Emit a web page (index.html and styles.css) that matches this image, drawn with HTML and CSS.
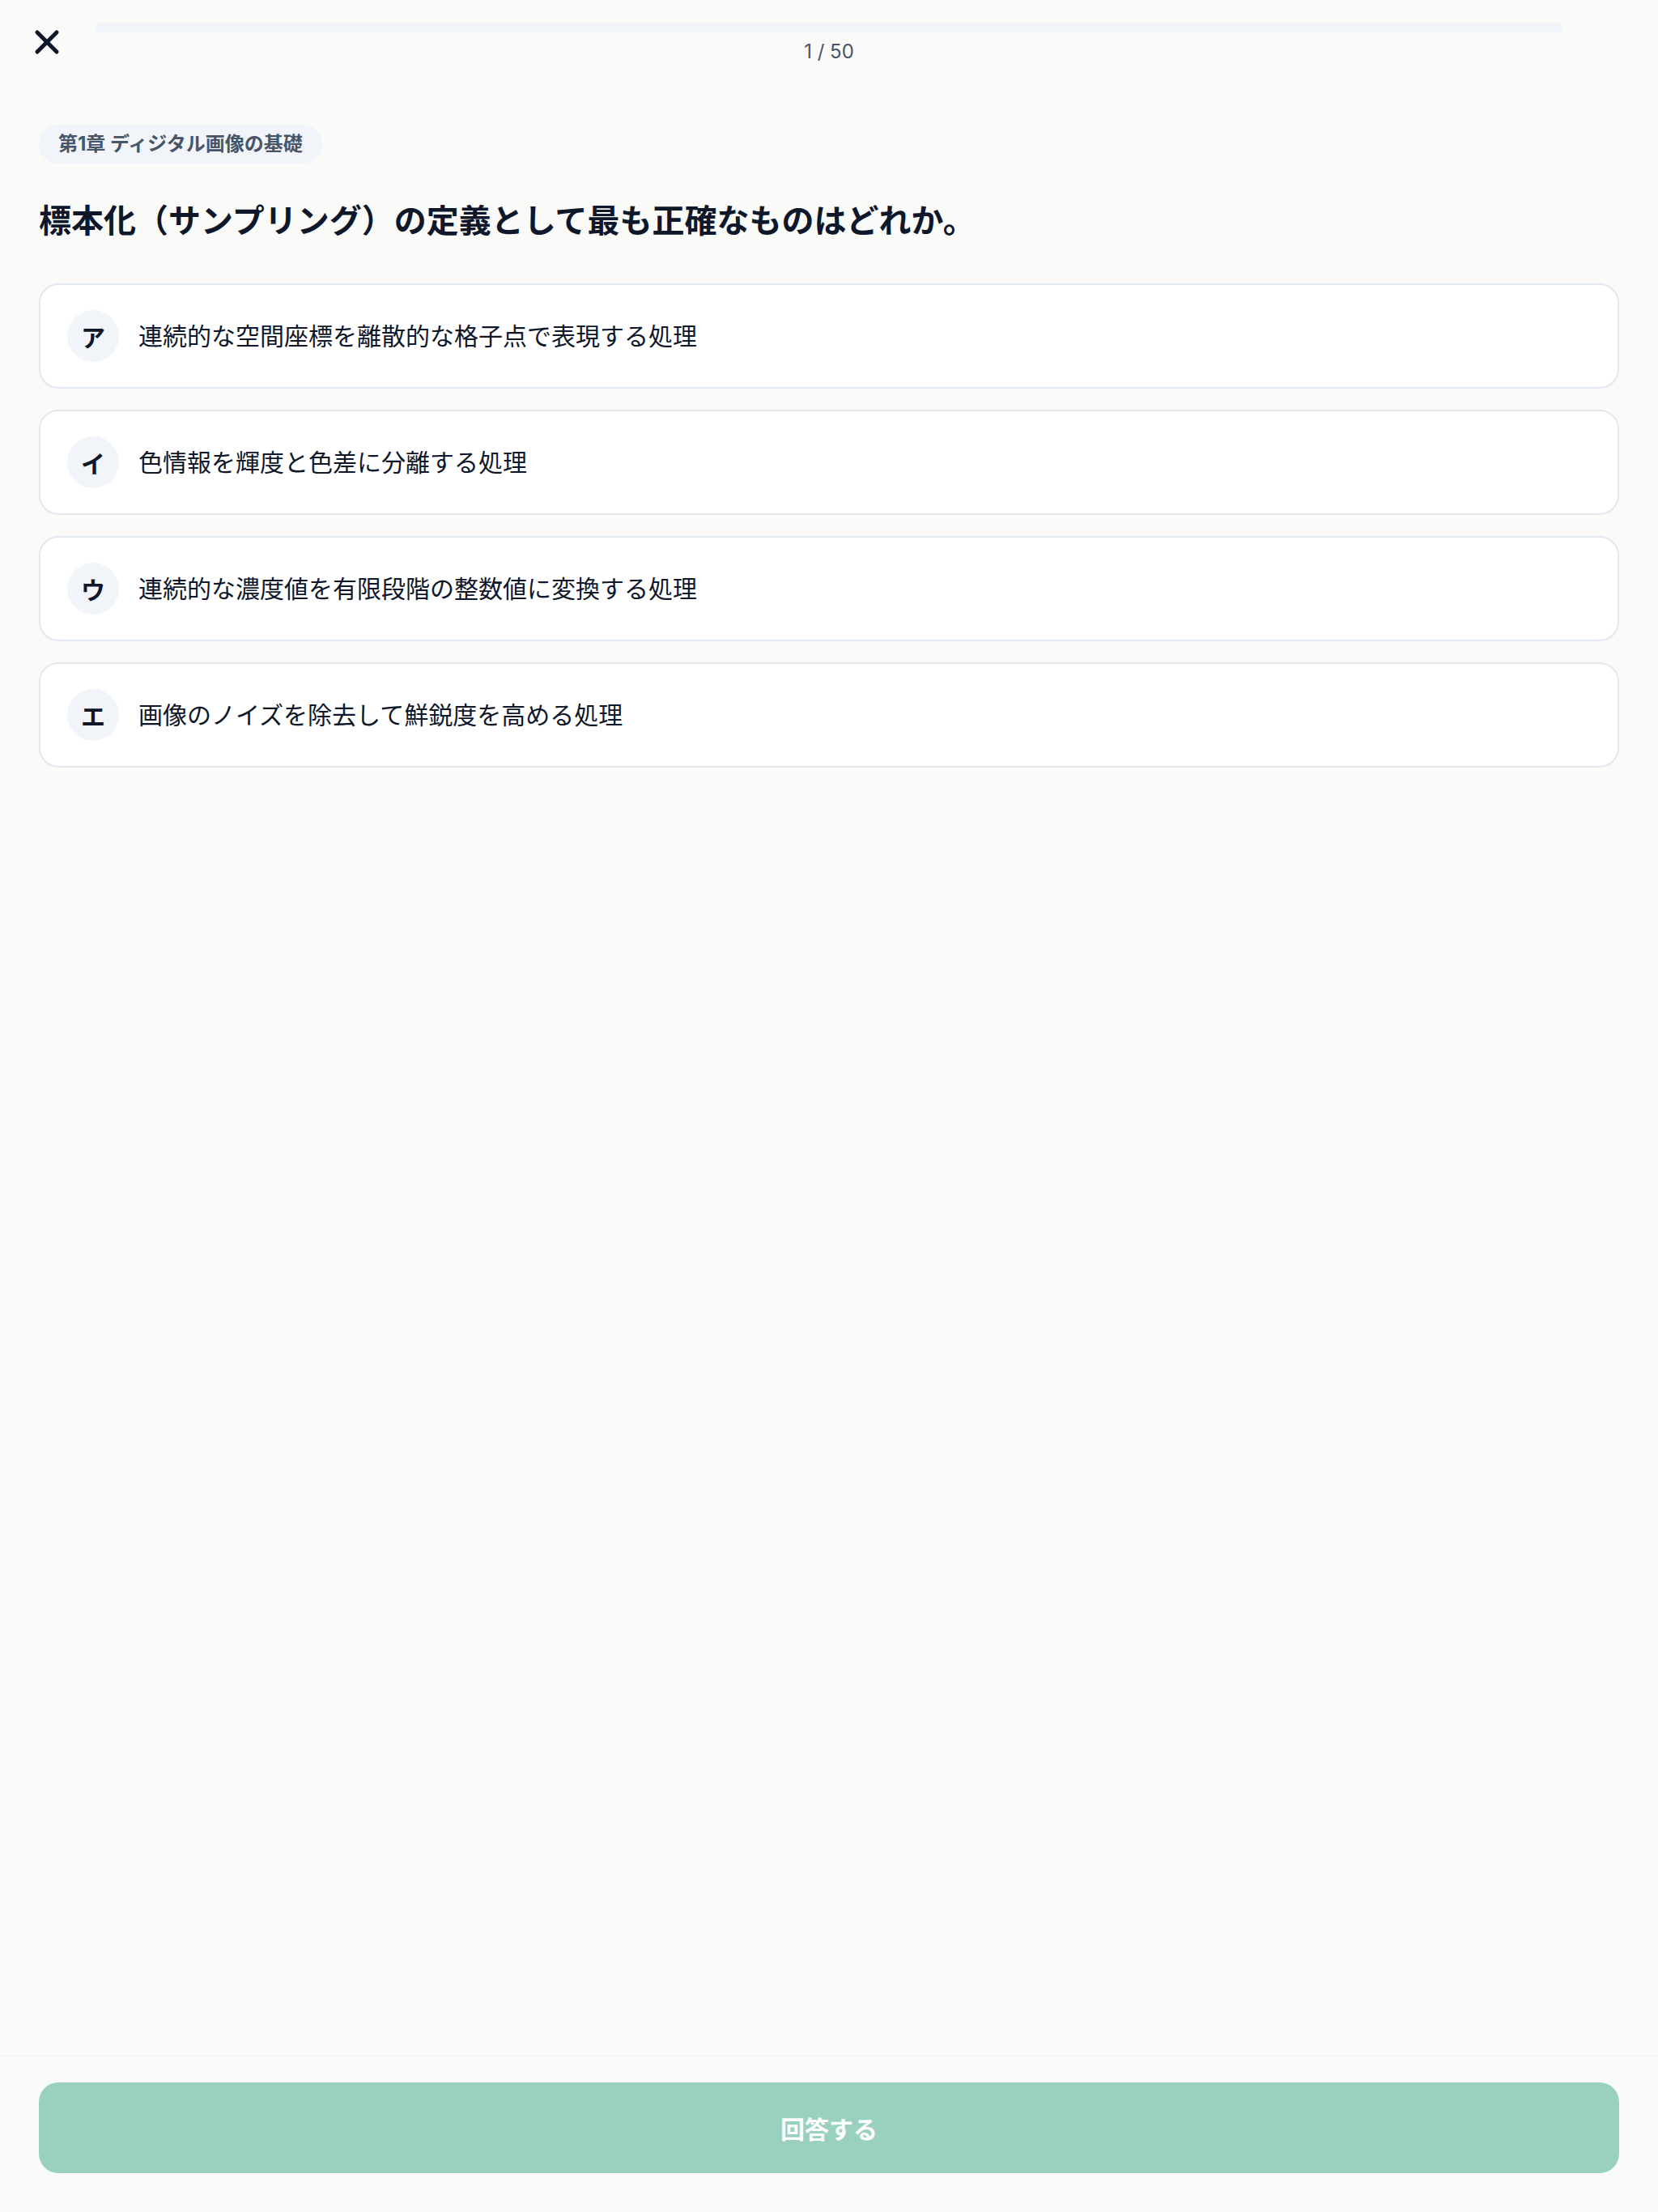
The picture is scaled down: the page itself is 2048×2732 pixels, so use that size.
FILE: index.html
```html
<!DOCTYPE html>
<html lang="ja">
  <head>
    <meta charset="utf-8">
    <title>問題 1 / 50</title>
    <link rel="stylesheet" href="styles.css">
  </head>
  <body>
    <div class="quiz-page">

      <header class="quiz-header">
        <button class="close-button" aria-label="閉じる">
          <svg viewBox="0 0 24 24" width="48" height="48" fill="none" stroke="currentColor" stroke-width="2.5" stroke-linecap="round" stroke-linejoin="round">
            <path d="M18 6 6 18"></path>
            <path d="m6 6 12 12"></path>
          </svg>
        </button>

        <div class="progress">
          <div class="progress-track">
            <div class="progress-fill" style="width: 0%;"></div>
          </div>
          <p class="progress-count">1 / 50</p>
        </div>

        <div class="header-spacer"></div>
      </header>

      <main class="quiz-main">
        <span class="chapter-chip">第1章 ディジタル画像の基礎</span>

        <h1 class="question">標本化（サンプリング）の定義として最も正確なものはどれか。</h1>

        <div class="choices">
          <button class="choice">
            <span class="choice-mark">ア</span>
            <span class="choice-text">連続的な空間座標を離散的な格子点で表現する処理</span>
          </button>
          <button class="choice">
            <span class="choice-mark">イ</span>
            <span class="choice-text">色情報を輝度と色差に分離する処理</span>
          </button>
          <button class="choice">
            <span class="choice-mark">ウ</span>
            <span class="choice-text">連続的な濃度値を有限段階の整数値に変換する処理</span>
          </button>
          <button class="choice">
            <span class="choice-mark">エ</span>
            <span class="choice-text">画像のノイズを除去して鮮鋭度を高める処理</span>
          </button>
        </div>
      </main>

      <footer class="quiz-footer">
        <button class="answer-button" disabled>回答する</button>
      </footer>

    </div>
  </body>
</html>
```

FILE: styles.css
```css
* {
  box-sizing: border-box;
}

body {
  margin: 0;
  background-color: #fafaf9;
  color: #0f172a;
  font-family: Inter, "Noto Sans CJK JP", sans-serif;
}

button {
  font-family: inherit;
}

.quiz-page {
  display: flex;
  flex-direction: column;
  min-height: 2732px;
}

/* header */

.quiz-header {
  display: grid;
  grid-template-columns: 48px 1fr 48px;
  column-gap: 35px;
  padding: 28px 34px 0 34px;
}

.close-button {
  width: 48px;
  height: 48px;
  padding: 0;
  border: none;
  background-color: transparent;
  color: #0f172a;
  display: flex;
}

.progress-track {
  height: 12px;
  border-radius: 6px;
  background-color: #f1f5f9;
  overflow: hidden;
}

.progress-fill {
  height: 100%;
  background-color: #10b981;
}

.progress-count {
  margin: 8px 0 0 0;
  text-align: center;
  font-size: 24px;
  line-height: 32px;
  color: #475569;
}

/* question */

.quiz-main {
  flex: 1;
  padding: 74px 48px 0 48px;
}

.chapter-chip {
  display: inline-block;
  padding: 8px 24px;
  border-radius: 24px;
  background-color: #f1f5f9;
  color: #475569;
  font-size: 24px;
  font-weight: bold;
  line-height: 32px;
}

.question {
  margin: 41px 0 47px 0;
  font-size: 40px;
  line-height: 60px;
  font-weight: bold;
  color: #0f172a;
}

.choices {
  display: flex;
  flex-direction: column;
  gap: 26px;
}

.choice {
  display: flex;
  align-items: center;
  gap: 24px;
  width: 100%;
  padding: 31px 33px;
  border: 2px solid #e2e8f0;
  border-radius: 24px;
  background-color: white;
  text-align: left;
}

.choice-mark {
  display: flex;
  justify-content: center;
  align-items: center;
  width: 64px;
  height: 64px;
  flex-shrink: 0;
  border-radius: 32px;
  background-color: #f1f5f9;
  color: #0f172a;
  font-size: 30px;
  font-weight: bold;
}

.choice-text {
  font-size: 30px;
  line-height: 44px;
  color: #0f172a;
}

/* footer */

.quiz-footer {
  border-top: 2px solid #f1f5f9;
  padding: 32px 48px 48px 48px;
}

.answer-button {
  width: 100%;
  height: 112px;
  border: none;
  border-radius: 24px;
  background-color: #99d1be;
  color: white;
  font-size: 30px;
  font-weight: bold;
}
```
